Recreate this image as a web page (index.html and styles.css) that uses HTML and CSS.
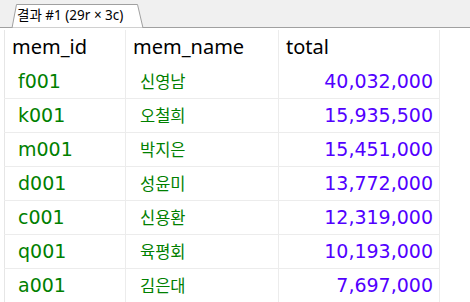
FILE: index.html
```html
<!DOCTYPE html>
<html lang="ko">
<head>
  <meta charset="UTF-8" />
  <meta name="viewport" content="width=device-width, initial-scale=1.0" />
  <title>결과 #1</title>
  <link rel="stylesheet" href="styles.css">
</head>
<body>
  <div class="tab-bar">
    <div class="tab">
      <svg class="tab-shape" width="134" height="24" viewBox="0 0 134 24">
        <polygon points="1,24 5.5,0.5 126.5,0.5 132,24" fill="#fff" stroke="#a0a0a0" stroke-width="1" />
      </svg>
      <span class="tab-label">결과 #1 (29r × 3c)</span>
    </div>
  </div>

  <div class="grid-wrap">
    <table class="grid">
      <thead>
        <tr>
          <th class="col-id">mem_id</th>
          <th class="col-name">mem_name</th>
          <th class="col-total">total</th>
        </tr>
      </thead>
      <tbody id="rows"></tbody>
    </table>
  </div>

  <script>
    const rows = [
      ['f001', '신영남', 40032000],
      ['k001', '오철희', 15935500],
      ['m001', '박지은', 15451000],
      ['d001', '성윤미', 13772000],
      ['c001', '신용환', 12319000],
      ['q001', '육평회', 10193000],
      ['a001', '김은대', 7697000]
    ];

    const tbody = document.getElementById('rows');
    rows.forEach(r => {
      const tr = document.createElement('tr');
      tr.innerHTML =
        '<td class="id">' + r[0] + '</td>' +
        '<td class="name">' + r[1] + '</td>' +
        '<td class="num">' + r[2].toLocaleString('en-US') + '</td>';
      tbody.appendChild(tr);
    });
  </script>
</body>
</html>
```

FILE: styles.css
```css
* {
  margin: 0;
  padding: 0;
  box-sizing: border-box;
}

body {
  width: 470px;
  height: 302px;
  overflow: hidden;
  background: #fff;
  font-family: 'DejaVu Sans', sans-serif;
}

.tab-bar {
  height: 28px;
  background: #f0f0f0;
  border-bottom: 1px solid #a0a0a0;
  display: flex;
  align-items: flex-end;
  padding-left: 11px;
}

.tab {
  position: relative;
  width: 134px;
  height: 24px;
  margin-bottom: -1px;
}

.tab-shape {
  display: block;
}

.tab-label {
  position: absolute;
  left: 6px;
  top: 3px;
  font-family: 'Noto Sans', 'Noto Sans CJK KR', sans-serif;
  font-size: 13.5px;
  line-height: 17px;
  color: #000;
  white-space: nowrap;
}

.grid-wrap {
  padding: 2px 0 0 4px;
}

.grid {
  border-collapse: collapse;
  table-layout: fixed;
  border-left: 1px solid #e6e6e6;
}

.grid th,
.grid td {
  height: 34px;
  border-right: 1px solid #ececec;
  white-space: nowrap;
  vertical-align: middle;
}

.grid th {
  font-family: 'Noto Sans', sans-serif;
  font-weight: normal;
  font-size: 20px;
  text-align: left;
  color: #000;
  padding: 0 0 2px 7px;
}

.grid td {
  border-bottom: 1px solid #ececec;
  font-size: 19px;
}

.col-id { width: 121px; }
.col-name { width: 153px; }
.col-total { width: 161px; }

.grid td.id {
  color: #008000;
  padding-left: 13px;
}

.grid td.name {
  color: #008000;
  font-family: 'Noto Sans CJK KR', sans-serif;
  font-size: 16.5px;
  padding-left: 14px;
}

.grid td.num {
  color: #5200ff;
  text-align: right;
  padding-right: 6px;
}
```
